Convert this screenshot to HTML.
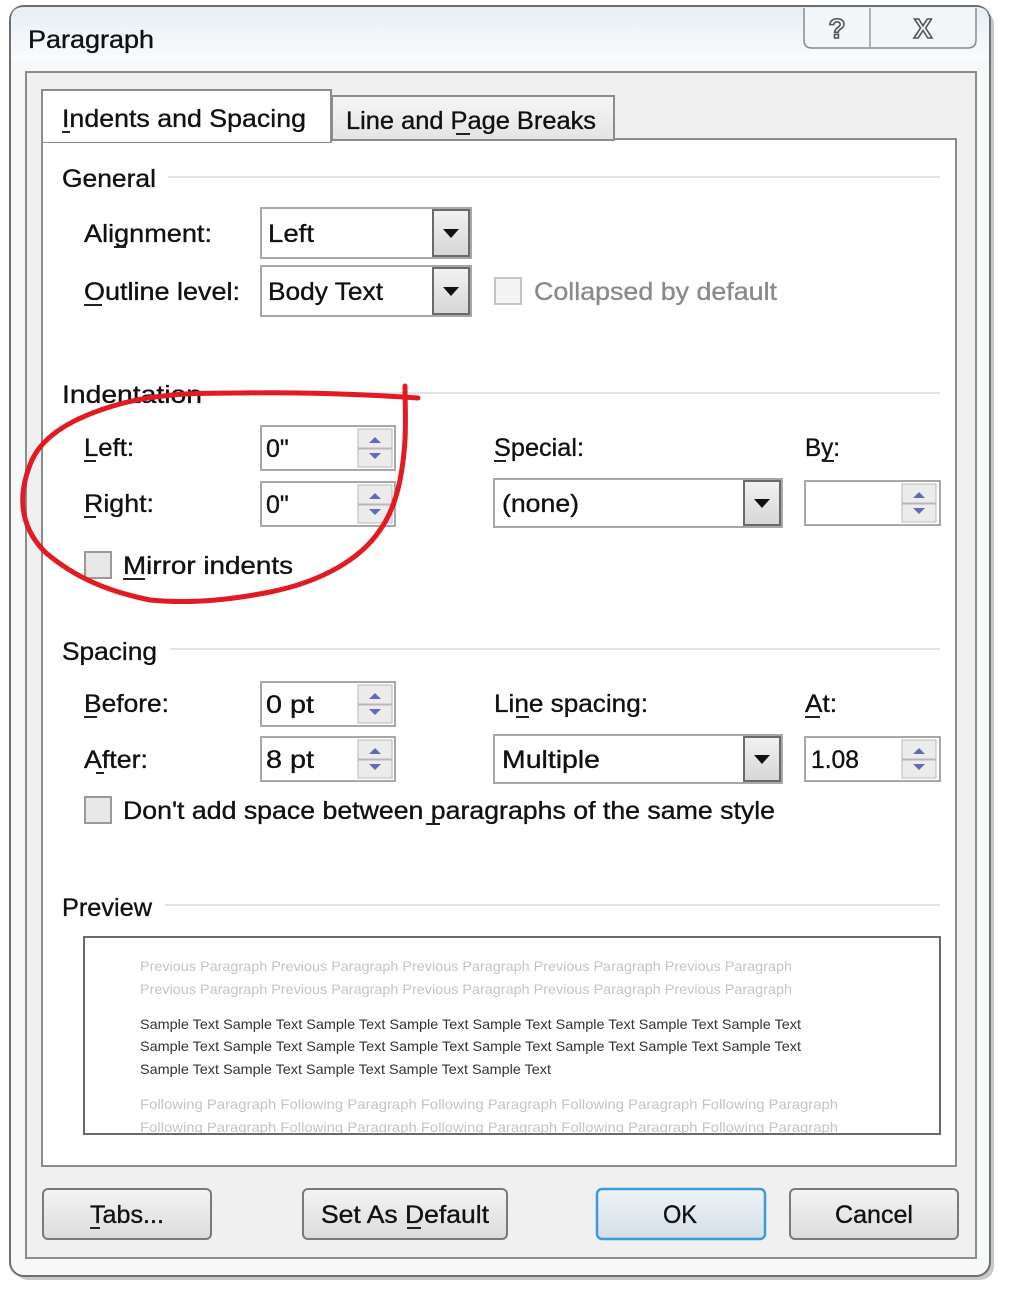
<!DOCTYPE html>
<html><head><meta charset="utf-8"><style>
html,body{margin:0;padding:0;background:#fff;}
svg{display:block}
text{font-family:"Liberation Sans",sans-serif;fill:#111;stroke:#111;stroke-width:0.35px;}
</style></head><body>
<svg width="1024" height="1292" viewBox="0 0 1024 1292" xmlns="http://www.w3.org/2000/svg">
<defs>
<linearGradient id="tb" x1="0" y1="0" x2="0" y2="1"><stop offset="0" stop-color="#e6eff6"/><stop offset="1" stop-color="#f9fbfc"/></linearGradient>
<linearGradient id="btn" x1="0" y1="0" x2="0" y2="1"><stop offset="0" stop-color="#f4f4f4"/><stop offset="1" stop-color="#dcdcdc"/></linearGradient>
<linearGradient id="ok" x1="0" y1="0" x2="0" y2="1"><stop offset="0" stop-color="#eef4f8"/><stop offset="1" stop-color="#d4dee6"/></linearGradient>
<linearGradient id="dd" x1="0" y1="0" x2="0" y2="1"><stop offset="0" stop-color="#f2f2f2"/><stop offset="1" stop-color="#d6d6d6"/></linearGradient>
<linearGradient id="tab2" x1="0" y1="0" x2="0" y2="1"><stop offset="0" stop-color="#f6f6f6"/><stop offset="1" stop-color="#e4e4e4"/></linearGradient>
</defs>
<rect width="1024" height="1292" fill="#fff"/>
<rect x="14" y="10" width="980" height="1270" rx="14" fill="#c8c8c8"/>
<rect x="10" y="6" width="980" height="1270" rx="14" fill="#f7f8f9" stroke="#6e6e6e" stroke-width="2"/>
<path d="M11 60 V20 Q11 7 24 7 H976 Q989 7 989 20 V60 Z" fill="url(#tb)"/>
<path d="M804 8 V40 Q804 48 812 48 H968 Q976 48 976 40 V8" fill="#f2f6f9" stroke="#8a8a8a" stroke-width="1.5"/>
<line x1="870" y1="8" x2="870" y2="48" stroke="#9a9a9a" stroke-width="1.5"/>
<text x="837" y="38" font-size="28" font-weight="bold" text-anchor="middle" style="fill:#f4f4f4;stroke:#555;stroke-width:1.6px">?</text>
<text x="923" y="38" font-size="28" font-weight="bold" text-anchor="middle" style="fill:#f4f4f4;stroke:#555;stroke-width:1.6px">X</text>
<text x="28" y="48" font-size="25" textLength="126" lengthAdjust="spacingAndGlyphs">Paragraph</text>
<rect x="26" y="72" width="950" height="1186" fill="#f0f0f0" stroke="#8c8c8c" stroke-width="2"/>
<rect x="42" y="139" width="914" height="1027" fill="#fff" stroke="#8c8c8c" stroke-width="2"/>
<rect x="332" y="96" width="282" height="44" fill="url(#tab2)" stroke="#8c8c8c" stroke-width="2"/>
<rect x="42" y="90" width="289" height="52" fill="#fff" stroke="#8c8c8c" stroke-width="2"/>
<rect x="43" y="138" width="287" height="4" fill="#fff"/>
<text x="62" y="127" font-size="25" textLength="244" lengthAdjust="spacingAndGlyphs">Indents and Spacing</text>
<line x1="62" y1="132" x2="70" y2="132" stroke="#222" stroke-width="2"/>
<text x="346" y="129" font-size="25" textLength="250" lengthAdjust="spacingAndGlyphs">Line and Page Breaks</text>
<line x1="456" y1="134" x2="470" y2="134" stroke="#222" stroke-width="2"/>

<g stroke="#d4dde6" stroke-width="1.5">
<line x1="168" y1="177" x2="940" y2="177"/>
<line x1="212" y1="393" x2="940" y2="393"/>
<line x1="170" y1="649" x2="940" y2="649"/>
<line x1="165" y1="905" x2="940" y2="905"/>
</g>
<text x="62" y="187" font-size="25" textLength="94" lengthAdjust="spacingAndGlyphs">General</text>
<text x="62" y="403" font-size="25" textLength="140" lengthAdjust="spacingAndGlyphs">Indentation</text>
<text x="62" y="660" font-size="25" textLength="95" lengthAdjust="spacingAndGlyphs">Spacing</text>
<text x="62" y="916" font-size="25" textLength="90" lengthAdjust="spacingAndGlyphs">Preview</text>

<g font-size="25">
<text x="84" y="242" textLength="128" lengthAdjust="spacingAndGlyphs">Alignment:</text>
<text x="84" y="300" textLength="156" lengthAdjust="spacingAndGlyphs">Outline level:</text>
<text x="84" y="456" textLength="50" lengthAdjust="spacingAndGlyphs">Left:</text>
<text x="84" y="512" textLength="70" lengthAdjust="spacingAndGlyphs">Right:</text>
<text x="123" y="574" textLength="170" lengthAdjust="spacingAndGlyphs">Mirror indents</text>
<text x="494" y="456" textLength="90" lengthAdjust="spacingAndGlyphs">Special:</text>
<text x="805" y="456" textLength="35" lengthAdjust="spacingAndGlyphs">By:</text>
<text x="84" y="712" textLength="85" lengthAdjust="spacingAndGlyphs">Before:</text>
<text x="84" y="768" textLength="64" lengthAdjust="spacingAndGlyphs">After:</text>
<text x="494" y="712" textLength="154" lengthAdjust="spacingAndGlyphs">Line spacing:</text>
<text x="805" y="712" textLength="32" lengthAdjust="spacingAndGlyphs">At:</text>
<text x="123" y="819" textLength="652" lengthAdjust="spacingAndGlyphs">Don't add space between paragraphs of the same style</text>
<text x="534" y="300" textLength="243" lengthAdjust="spacingAndGlyphs" style="fill:#8a8a8a;stroke:#8a8a8a">Collapsed by default</text>
</g>
<g stroke="#222" stroke-width="2">
<line x1="114" y1="247" x2="126" y2="247"/>
<line x1="84" y1="305" x2="102" y2="305"/>
<line x1="84" y1="461" x2="96" y2="461"/>
<line x1="84" y1="517" x2="96" y2="517"/>
<line x1="123" y1="579" x2="145" y2="579"/>
<line x1="494" y1="461" x2="506" y2="461"/>
<line x1="822" y1="461" x2="834" y2="461"/>
<line x1="84" y1="717" x2="97" y2="717"/>
<line x1="96" y1="773" x2="104" y2="773"/>
<line x1="516" y1="717" x2="529" y2="717"/>
<line x1="805" y1="717" x2="820" y2="717"/>
<line x1="426" y1="824" x2="440" y2="824"/>
</g>

<g>
<rect x="261" y="208" width="210" height="50" fill="#fff" stroke="#a8a8a8" stroke-width="2"/>
<rect x="433" y="210" width="36" height="46" fill="url(#dd)" stroke="#6a6a6a" stroke-width="2"/>
<path d="M443 229 h16 l-8 9z" fill="#111"/>
<text x="268" y="242" font-size="25" textLength="46" lengthAdjust="spacingAndGlyphs">Left</text>
<rect x="261" y="266" width="210" height="50" fill="#fff" stroke="#a8a8a8" stroke-width="2"/>
<rect x="433" y="268" width="36" height="46" fill="url(#dd)" stroke="#6a6a6a" stroke-width="2"/>
<path d="M443 287 h16 l-8 9z" fill="#111"/>
<text x="268" y="300" font-size="25" textLength="115" lengthAdjust="spacingAndGlyphs">Body Text</text>
<rect x="494" y="479" width="288" height="48" fill="#fff" stroke="#a8a8a8" stroke-width="2"/>
<rect x="744" y="481" width="36" height="44" fill="url(#dd)" stroke="#6a6a6a" stroke-width="2"/>
<path d="M754 499 h16 l-8 9z" fill="#111"/>
<text x="502" y="512" font-size="25" textLength="77" lengthAdjust="spacingAndGlyphs">(none)</text>
<rect x="494" y="735" width="288" height="48" fill="#fff" stroke="#a8a8a8" stroke-width="2"/>
<rect x="744" y="737" width="36" height="44" fill="url(#dd)" stroke="#6a6a6a" stroke-width="2"/>
<path d="M754 755 h16 l-8 9z" fill="#111"/>
<text x="502" y="768" font-size="25" textLength="98" lengthAdjust="spacingAndGlyphs">Multiple</text>
</g>

<g>
<rect x="261" y="426" width="134" height="44" fill="#fff" stroke="#a8a8a8" stroke-width="2"/>
<rect x="358" y="429" width="34" height="19" fill="#ececec" stroke="#b8b8b8"/><rect x="358" y="449" width="34" height="18" fill="#ececec" stroke="#b8b8b8"/>
<path d="M369 443 h12 l-6 -6z M369 453 h12 l-6 6z" fill="#5a6eb4"/>
<text x="266" y="457" font-size="25">0"</text>
<rect x="261" y="482" width="134" height="44" fill="#fff" stroke="#a8a8a8" stroke-width="2"/>
<rect x="358" y="485" width="34" height="19" fill="#ececec" stroke="#b8b8b8"/><rect x="358" y="505" width="34" height="18" fill="#ececec" stroke="#b8b8b8"/>
<path d="M369 499 h12 l-6 -6z M369 509 h12 l-6 6z" fill="#5a6eb4"/>
<text x="266" y="513" font-size="25">0"</text>
<rect x="805" y="481" width="135" height="44" fill="#fff" stroke="#a8a8a8" stroke-width="2"/>
<rect x="902" y="484" width="34" height="19" fill="#ececec" stroke="#b8b8b8"/><rect x="902" y="504" width="34" height="18" fill="#ececec" stroke="#b8b8b8"/>
<path d="M913 498 h12 l-6 -6z M913 508 h12 l-6 6z" fill="#5a6eb4"/>
<rect x="261" y="682" width="134" height="44" fill="#fff" stroke="#a8a8a8" stroke-width="2"/>
<rect x="358" y="685" width="34" height="19" fill="#ececec" stroke="#b8b8b8"/><rect x="358" y="705" width="34" height="18" fill="#ececec" stroke="#b8b8b8"/>
<path d="M369 699 h12 l-6 -6z M369 709 h12 l-6 6z" fill="#5a6eb4"/>
<text x="266" y="713" font-size="25" textLength="48" lengthAdjust="spacingAndGlyphs">0 pt</text>
<rect x="261" y="737" width="134" height="44" fill="#fff" stroke="#a8a8a8" stroke-width="2"/>
<rect x="358" y="740" width="34" height="19" fill="#ececec" stroke="#b8b8b8"/><rect x="358" y="760" width="34" height="18" fill="#ececec" stroke="#b8b8b8"/>
<path d="M369 754 h12 l-6 -6z M369 764 h12 l-6 6z" fill="#5a6eb4"/>
<text x="266" y="768" font-size="25" textLength="48" lengthAdjust="spacingAndGlyphs">8 pt</text>
<rect x="805" y="737" width="135" height="44" fill="#fff" stroke="#a8a8a8" stroke-width="2"/>
<rect x="902" y="740" width="34" height="19" fill="#ececec" stroke="#b8b8b8"/><rect x="902" y="760" width="34" height="18" fill="#ececec" stroke="#b8b8b8"/>
<path d="M913 754 h12 l-6 -6z M913 764 h12 l-6 6z" fill="#5a6eb4"/>
<text x="811" y="768" font-size="25" textLength="48" lengthAdjust="spacingAndGlyphs">1.08</text>
</g>

<rect x="495" y="278" width="26" height="26" fill="#f4f4f4" stroke="#c4c4c4" stroke-width="2"/>
<rect x="85" y="552" width="26" height="26" fill="#e8e8e8" stroke="#9a9a9a" stroke-width="2"/>
<rect x="85" y="797" width="26" height="26" fill="#e8e8e8" stroke="#9a9a9a" stroke-width="2"/>

<rect x="84" y="937" width="856" height="197" fill="#fff" stroke="#6a6a6a" stroke-width="2"/>
<g font-size="14">
<text x="140" y="971" textLength="652" lengthAdjust="spacingAndGlyphs" style="fill:#c4c4c4;stroke:none">Previous Paragraph Previous Paragraph Previous Paragraph Previous Paragraph Previous Paragraph</text>
<text x="140" y="994" textLength="652" lengthAdjust="spacingAndGlyphs" style="fill:#c4c4c4;stroke:none">Previous Paragraph Previous Paragraph Previous Paragraph Previous Paragraph Previous Paragraph</text>
<text x="140" y="1029" textLength="661" lengthAdjust="spacingAndGlyphs" style="fill:#333;stroke:none">Sample Text Sample Text Sample Text Sample Text Sample Text Sample Text Sample Text Sample Text</text>
<text x="140" y="1051" textLength="661" lengthAdjust="spacingAndGlyphs" style="fill:#333;stroke:none">Sample Text Sample Text Sample Text Sample Text Sample Text Sample Text Sample Text Sample Text</text>
<text x="140" y="1074" textLength="411" lengthAdjust="spacingAndGlyphs" style="fill:#333;stroke:none">Sample Text Sample Text Sample Text Sample Text Sample Text</text>
<text x="140" y="1109" textLength="698" lengthAdjust="spacingAndGlyphs" style="fill:#c4c4c4;stroke:none">Following Paragraph Following Paragraph Following Paragraph Following Paragraph Following Paragraph</text>
</g>
<svg x="85" y="1115" width="854" height="18" overflow="hidden"><text x="55" y="17" font-size="14" textLength="698" lengthAdjust="spacingAndGlyphs" style="fill:#c4c4c4;stroke:none">Following Paragraph Following Paragraph Following Paragraph Following Paragraph Following Paragraph</text></svg>

<rect x="43" y="1189" width="168" height="50" rx="5" fill="url(#btn)" stroke="#7a7a7a" stroke-width="2"/>
<text x="127" y="1223" font-size="25" text-anchor="middle" textLength="74" lengthAdjust="spacingAndGlyphs">Tabs...</text>
<line x1="90" y1="1228" x2="100" y2="1228" stroke="#222" stroke-width="2"/>
<rect x="303" y="1189" width="204" height="50" rx="5" fill="url(#btn)" stroke="#7a7a7a" stroke-width="2"/>
<text x="405" y="1223" font-size="25" text-anchor="middle" textLength="168" lengthAdjust="spacingAndGlyphs">Set As Default</text>
<line x1="407" y1="1228" x2="421" y2="1228" stroke="#222" stroke-width="2"/>
<rect x="597" y="1189" width="168" height="50" rx="5" fill="url(#ok)" stroke="#3c9ad6" stroke-width="2.5"/>
<text x="680" y="1223" font-size="25" text-anchor="middle" textLength="34" lengthAdjust="spacingAndGlyphs">OK</text>
<rect x="790" y="1189" width="168" height="50" rx="5" fill="url(#btn)" stroke="#7a7a7a" stroke-width="2"/>
<text x="874" y="1223" font-size="25" text-anchor="middle" textLength="78" lengthAdjust="spacingAndGlyphs">Cancel</text>

<path d="M418 398 C360 394 300 392 240 393 C200 393 160 393 120 404 C80 415 45 432 32 460 C18 492 18 525 45 552 C75 578 110 592 150 600 C190 604 230 600 270 592 C320 582 360 560 380 530 C398 505 403 470 405 440 C406 420 405 400 405 386" fill="none" stroke="#e21a22" stroke-width="5" stroke-linecap="round" stroke-linejoin="round"/>
</svg>
</body></html>
